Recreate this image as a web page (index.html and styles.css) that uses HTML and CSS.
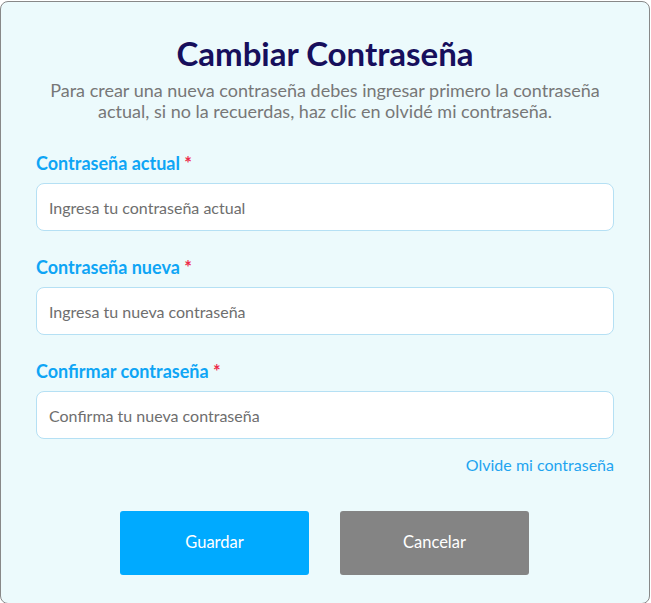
FILE: index.html
```html
<!DOCTYPE html>
<html>
	<head>
		<meta charset="utf-8"/>
		<title>Cambiar Contraseña</title>
		<link rel="stylesheet" href="styles.css">
	</head>
	<body>
		<div class="card">
			<h1 class="title">Cambiar Contraseña</h1>
			<p class="intro">Para crear una nueva contraseña debes ingresar primero la contraseña actual, si no la recuerdas, haz clic en olvidé mi contraseña.</p>
			<form class="form">
				<div class="field">
					<label class="label">Contraseña actual <span class="req">*</span></label>
					<input class="input" type="password" placeholder="Ingresa tu contraseña actual">
				</div>
				<div class="field">
					<label class="label">Contraseña nueva <span class="req">*</span></label>
					<input class="input" type="password" placeholder="Ingresa tu nueva contraseña">
				</div>
				<div class="field">
					<label class="label">Confirmar contraseña <span class="req">*</span></label>
					<input class="input" type="password" placeholder="Confirma tu nueva contraseña">
				</div>
				<div class="forgot-row">
					<a class="forgot" href="#">Olvide mi contraseña</a>
				</div>
				<div class="actions">
					<button class="btn btn-save" type="button">Guardar</button>
					<button class="btn btn-cancel" type="button">Cancelar</button>
				</div>
			</form>
		</div>
	</body>
</html>
```

FILE: styles.css
```css
body {
	margin: 0;
	background-color: #ffffff;
	font-family: Lato, "Open Sans", sans-serif;
}
.card {
	margin: 1px 1px 0 0;
	height: 603px;
	box-sizing: border-box;
	background-color: #ecfafc;
	border: 1px solid #888888;
	border-radius: 8px;
	padding: 31px 35px 0 35px;
}
.title {
	margin: 0;
	text-align: center;
	color: #170f5c;
	font-size: 33px;
	font-weight: bold;
	line-height: 40px;
}
.intro {
	margin: 7px 0 0 0;
	text-align: center;
	color: #777777;
	font-size: 18px;
	line-height: 21px;
}
.form {
	display: flex;
	flex-direction: column;
	gap: 25px;
	margin-top: 30px;
}
.label {
	display: block;
	color: #0ea5f5;
	font-size: 18px;
	font-weight: bold;
	line-height: 22px;
	margin-bottom: 9px;
}
.req {
	color: #ee2a4a;
}
.input {
	display: block;
	width: 100%;
	height: 48px;
	box-sizing: border-box;
	border: 1px solid #b5e0f4;
	border-radius: 8px;
	background-color: #ffffff;
	padding: 0 12px;
	font-family: Lato, sans-serif;
	font-size: 16px;
	color: #555555;
}
.input::placeholder {
	color: #6e6e6e;
}
.forgot-row {
	text-align: right;
	margin-top: -9px;
	line-height: 20px;
}
.forgot {
	color: #1ea4f0;
	font-size: 16px;
	text-decoration: none;
}
.actions {
	display: flex;
	justify-content: center;
	gap: 31px;
	margin-top: 11px;
	padding-right: 1px;
}
.btn {
	width: 189px;
	height: 64px;
	padding: 0 0 3px 0;
	border: none;
	border-radius: 3px;
	color: #ffffff;
	font-family: Lato, sans-serif;
	font-size: 16.5px;
}
.btn-save {
	background-color: #00aaff;
}
.btn-cancel {
	background-color: #848484;
}
```
